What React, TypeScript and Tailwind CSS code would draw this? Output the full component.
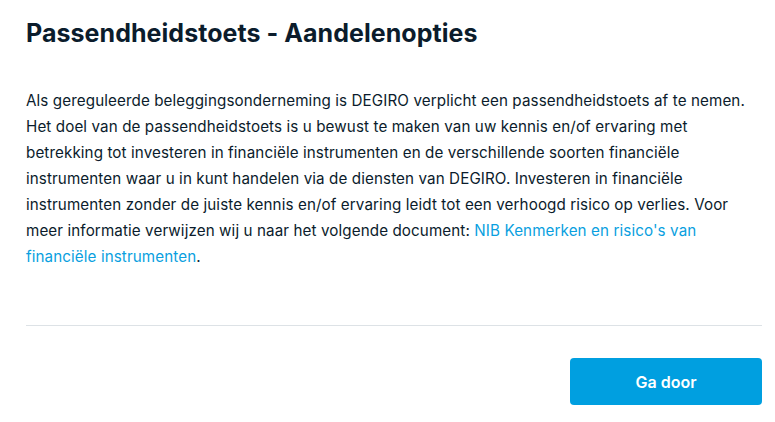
export default function App() {
  return (
    <div
      className="w-[775px] h-[422px] bg-white pl-[26px] pr-[13px] pt-[16px] text-[#0b1c2c]"
      style={{ fontFamily: "Inter, 'Noto Sans', sans-serif" }}
    >
      <h1 className="text-[25px] leading-[34px] font-bold tracking-[0.05px] whitespace-nowrap">
        Passendheidstoets - Aandelenopties
      </h1>
      <p className="mt-[38px] text-[15.2px] leading-[26px] tracking-[0.1px] whitespace-nowrap">
        Als gereguleerde beleggingsonderneming is DEGIRO verplicht een passendheidstoets af te nemen.
        <br />
        Het doel van de passendheidstoets is u bewust te maken van uw kennis en/of ervaring met
        <br />
        betrekking tot investeren in financiële instrumenten en de verschillende soorten financiële
        <br />
        instrumenten waar u in kunt handelen via de diensten van DEGIRO. Investeren in financiële
        <br />
        instrumenten zonder de juiste kennis en/of ervaring leidt tot een verhoogd risico op verlies. Voor
        <br />
        meer informatie verwijzen wij u naar het volgende document:{" "}
        <a className="text-[#0a9fe0]" href="#">
          NIB Kenmerken en risico's van
          <br />
          financiële instrumenten
        </a>
        .
      </p>
      <div className="mt-[55px] h-px bg-[#dde2e6]" />
      <div className="mt-[32px] flex justify-end">
        <button className="w-[192px] h-[47px] rounded-[4px] bg-[#009fe0] text-white text-[16px] font-semibold">
          Ga door
        </button>
      </div>
    </div>
  );
}
